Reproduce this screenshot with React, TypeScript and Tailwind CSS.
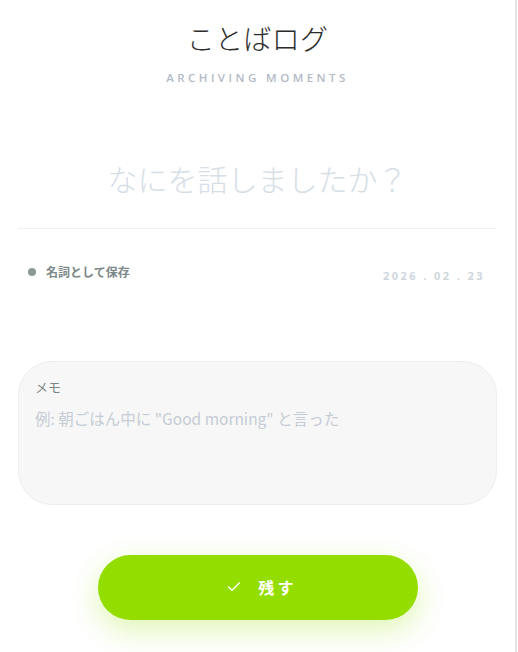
import { Check } from "lucide-react";

const jp = "font-['Noto_Sans_CJK_JP','Noto_Sans',sans-serif]";

export default function App() {
  return (
    <div className={`w-[517px] min-h-[652px] bg-white border-r-2 border-[#e3e3e3] px-[18px] ${jp}`}>
      {/* header */}
      <div className="flex flex-col items-center pt-[20px]">
        <h1 className="text-[28px] font-light tracking-[0.01em] text-[#2b2b2b] leading-[36px]">ことばログ</h1>
        <p className="mt-[13px] text-[11.5px] font-semibold tracking-[0.3em] text-[#b3bac6] font-['Open_Sans',sans-serif]">
          ARCHIVING MOMENTS
        </p>
      </div>

      {/* word input */}
      <div className="mt-[70px] border-b border-[#f1f1ea] pb-[27px]">
        <input
          className="w-full text-center text-[30px] font-extralight text-[#333] placeholder:text-[#d6dee6] outline-none bg-transparent"
          placeholder="なにを話しましたか？"
        />
      </div>

      {/* meta row */}
      <div className="flex justify-between items-start mt-[34px] px-[10px]">
        <div className="flex items-center gap-[10px]">
          <span className="w-[8px] h-[8px] rounded-full bg-[#8e9a9a]" />
          <span className="text-[12px] font-bold text-[#7d8888]">名詞として保存</span>
        </div>
        <span className="mt-[5px] mr-[2px] text-[11px] font-bold tracking-[0.22em] text-[#cfd6dc] font-['Open_Sans',sans-serif]">
          2026 . 02 . 23
        </span>
      </div>

      {/* memo */}
      <div className="mt-[76px] h-[144px] rounded-[34px] bg-[#f7f7f7] border border-[#eeeeee] px-[16px] pt-[15px]">
        <p className="text-[13px] text-[#7a8585]">メモ</p>
        <textarea
          className="mt-[11px] w-full resize-none bg-transparent outline-none text-[15.5px] text-[#333] placeholder:text-[#c5ccd5]"
          placeholder={'例: 朝ごはん中に "Good morning" と言った'}
          rows={3}
        />
      </div>

      {/* submit */}
      <div className="flex justify-center mt-[50px]">
        <button className="w-[320px] h-[65px] rounded-full bg-[#94dd00] text-white flex items-center justify-center gap-[16px] shadow-[0_10px_30px_rgba(148,221,0,0.3)]">
          <Check size={16} strokeWidth={2} className="ml-[8px]" />
          <span className="text-[16px] font-bold tracking-[0.2em]">残す</span>
        </button>
      </div>
    </div>
  );
}
